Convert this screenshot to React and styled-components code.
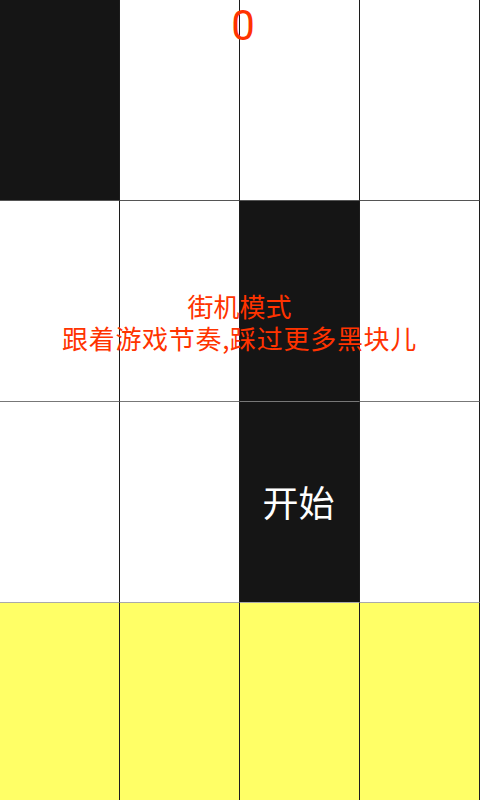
import React from "react";
import styled, { createGlobalStyle } from "styled-components";

const Global = createGlobalStyle`
  html, body { margin: 0; padding: 0; background: #ffffff; }
  body { width: 480px; height: 800px; overflow: hidden; }
`;

const Board = styled.div`
  position: relative;
  width: 480px;
  height: 800px;
  display: flex;
  flex-direction: column;
  font-family: "Noto Sans CJK SC", "Noto Sans", sans-serif;
`;

const Row = styled.div`
  display: grid;
  grid-template-columns: repeat(4, 120px);
  height: ${(p) => (p.$last ? "197px" : "201px")};
  flex: ${(p) => (p.$last ? "1 1 auto" : "0 0 auto")};
`;

const Cell = styled.div`
  box-sizing: border-box;
  border-right: 1px solid #1c1c1c;
  border-bottom: ${(p) => (p.$last ? "none" : `1px solid ${p.$line}`)};
  background: ${(p) => (p.$kind === "black" ? "#151515" : p.$kind === "yellow" ? "#ffff66" : "#ffffff")};
  display: flex;
  align-items: center;
  justify-content: center;
`;

const StartLabel = styled.span`
  color: #ffffff;
  font-size: 36px;
  line-height: 1;
  margin-left: -2px;
  margin-top: -3px;
`;

const Score = styled.div`
  position: absolute;
  top: 2px;
  left: 0;
  width: 486px;
  text-align: center;
  color: #ff3300;
  font-family: Roboto, "Noto Sans", sans-serif;
  font-size: 42px;
  line-height: 48px;
  pointer-events: none;
`;

const Message = styled.div`
  position: absolute;
  top: 290px;
  left: 0;
  width: 479px;
  text-align: center;
  color: #ff3300;
  font-size: 26px;
  line-height: 32px;
  pointer-events: none;
`;

const Line = styled.div`
  letter-spacing: ${(p) => p.$ls || "0px"};
`;

const rows = [
  ["black", "white", "white", "white"],
  ["white", "white", "black", "white"],
  ["white", "white", "black", "white"],
  ["yellow", "yellow", "yellow", "yellow"],
];
const lineColors = ["#555555", "#777777", "#aaaaaa", "none"];

export default function App() {
  return (
    <>
      <Global />
      <Board>
        {rows.map((r, ri) => (
          <Row key={ri} $last={ri === 3}>
            {r.map((k, ci) => (
              <Cell key={ci} $kind={k} $last={ri === 3} $line={lineColors[ri]}>
                {ri === 2 && ci === 2 ? <StartLabel>开始</StartLabel> : null}
              </Cell>
            ))}
          </Row>
        ))}
        <Score>0</Score>
        <Message>
          <Line>街机模式</Line>
          <Line $ls="0.7px">跟着游戏节奏,踩过更多黑块儿</Line>
        </Message>
      </Board>
    </>
  );
}
